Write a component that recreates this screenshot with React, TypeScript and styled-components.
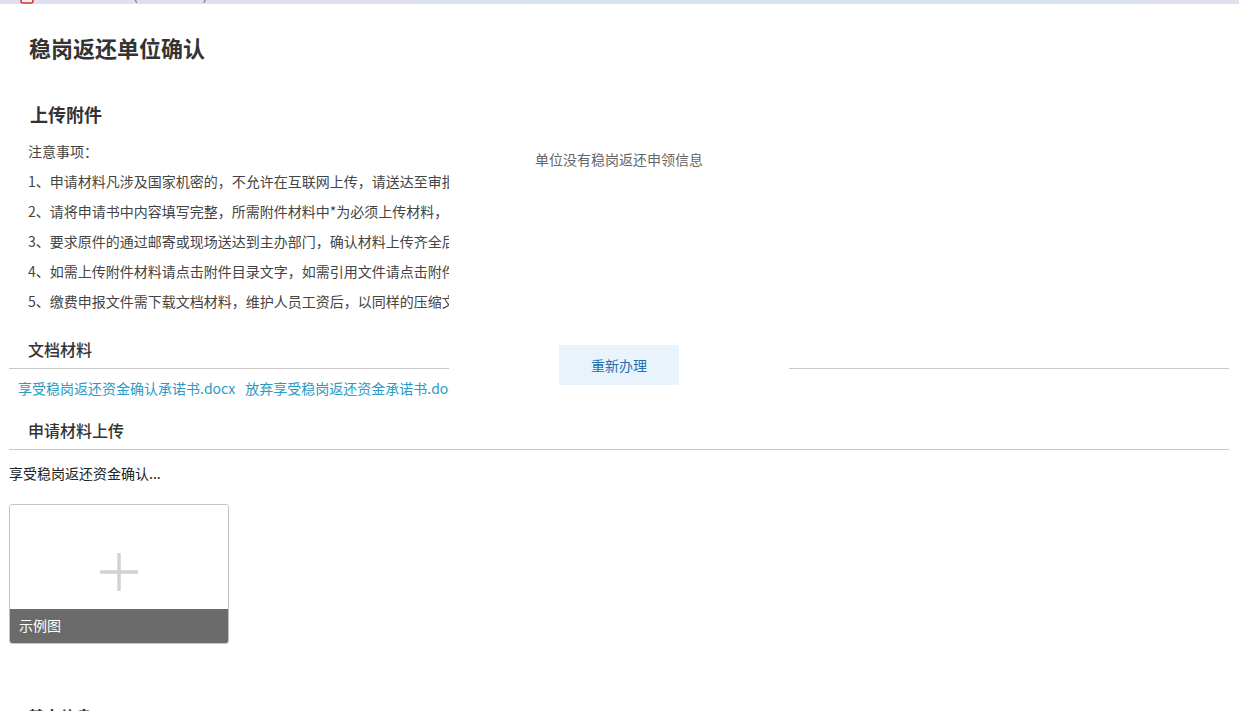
import styled, { createGlobalStyle } from "styled-components";

const GlobalStyle = createGlobalStyle`
  html, body {
    margin: 0;
    padding: 0;
    background: #fff;
    overflow: hidden;
  }
  body {
    font-family: "Noto Sans CJK SC", "Noto Sans", sans-serif;
    font-size: 14px;
    color: #333;
  }
`;

const Page = styled.div`
  position: relative;
  width: 1239px;
  height: 711px;
  overflow: hidden;
`;

const TabStrip = styled.div`
  height: 4px;
  display: flex;
  align-items: flex-end;
  padding-left: 20px;
  overflow: hidden;
  background: linear-gradient(90deg, #e0e0f2 0%, #dcdff0 30%, #d6e2ee 50%, #d6e3ec 80%, #e0e0ee 100%);
`;

const TabIcon = styled.svg`
  flex: none;
  width: 14px;
  height: 13px;
`;

const TabParen = styled.span<{ $left: number }>`
  flex: none;
  margin-left: ${(props) => props.$left}px;
  font-size: 14px;
  line-height: 19px;
  color: #666;
`;

const Content = styled.div`
  padding: 0 10px 0 9px;
`;

const Title = styled.h1`
  margin: 28px 0 0 20px;
  font-size: 22px;
  line-height: 30px;
  font-weight: 700;
  color: #333;
`;

const SectionTitle = styled.h2`
  margin: 37px 0 0 21px;
  font-size: 18px;
  line-height: 30px;
  font-weight: 700;
  color: #333;
`;

const Notes = styled.div`
  margin: 7px 0 0 19px;
  font-size: 14px;
  line-height: 30px;
  color: #444;
  white-space: nowrap;
`;

const SubHeader = styled.div<{ $top: number }>`
  height: 34px;
  box-sizing: border-box;
  margin-top: ${(props) => props.$top}px;
  padding-left: 19px;
  border-bottom: 1px solid #c8c8c8;
  font-size: 16px;
  line-height: 28px;
  font-weight: 500;
  color: #333;
`;

const LinkRow = styled.div`
  display: flex;
  gap: 10px;
  margin: 8px 0 0 9px;
  line-height: 22px;
  white-space: nowrap;
`;

const DocLink = styled.a`
  font-size: 14px;
  color: #2a9ac6;
`;

const UploadLabel = styled.div`
  margin-top: 12px;
  font-size: 14px;
  line-height: 22px;
  color: #222;
`;

const UploadCard = styled.div`
  width: 220px;
  height: 140px;
  box-sizing: border-box;
  margin-top: 20px;
  display: flex;
  flex-direction: column;
  border: 1px solid #c4c4c4;
  border-radius: 3px;
  overflow: hidden;
`;

const UploadArea = styled.div`
  flex: 1;
  box-sizing: border-box;
  padding-top: 30px;
  display: flex;
  align-items: center;
  justify-content: center;
  background: #fff;
`;

const Caption = styled.div`
  height: 34px;
  padding-left: 9px;
  background: #6b6b6b;
  font-size: 14px;
  line-height: 33px;
  color: #fff;
`;

const NextTitle = styled.div`
  margin: 58px 0 0 19px;
  font-size: 16px;
  line-height: 28px;
  font-weight: 700;
  color: #333;
`;

const Overlay = styled.div`
  position: absolute;
  left: 449px;
  top: 130px;
  width: 340px;
  height: 280px;
  box-sizing: border-box;
  padding-top: 18px;
  display: flex;
  flex-direction: column;
  align-items: center;
  background: #fff;
`;

const OverlayText = styled.div`
  font-size: 14px;
  line-height: 22px;
  color: #666;
`;

const RetryButton = styled.button`
  width: 120px;
  height: 40px;
  margin-top: 175px;
  padding: 0;
  border: 0;
  border-radius: 2px;
  background: #e8f3fb;
  font-family: inherit;
  font-size: 14px;
  color: #1f6fb2;
`;

const notes = [
  "注意事项：",
  "1、申请材料凡涉及国家机密的，不允许在互联网上传，请送达至审批部门。",
  "2、请将申请书中内容填写完整，所需附件材料中*为必须上传材料，",
  "3、要求原件的通过邮寄或现场送达到主办部门，确认材料上传齐全后提交。",
  "4、如需上传附件材料请点击附件目录文字，如需引用文件请点击附件。",
  "5、缴费申报文件需下载文档材料，维护人员工资后，以同样的压缩文件上传。",
];

const App = () => {
  return (
    <Page>
      <GlobalStyle />
      <TabStrip>
        <TabIcon viewBox="0 0 14 13">
          <rect x="1" y="0" width="12" height="12" rx="2" fill="#f3eef2" stroke="#d9363e" strokeWidth="1.6" />
        </TabIcon>
        <TabParen $left={99}>(</TabParen>
        <TabParen $left={65}>)</TabParen>
      </TabStrip>
      <Content>
        <Title>稳岗返还单位确认</Title>
        <SectionTitle>上传附件</SectionTitle>
        <Notes>
          {notes.map((note) => (
            <div key={note}>{note}</div>
          ))}
        </Notes>
        <SubHeader $top={19}>文档材料</SubHeader>
        <LinkRow>
          <DocLink>享受稳岗返还资金确认承诺书.docx</DocLink>
          <DocLink>放弃享受稳岗返还资金承诺书.docx</DocLink>
        </LinkRow>
        <SubHeader $top={17}>申请材料上传</SubHeader>
        <UploadLabel>享受稳岗返还资金确认...</UploadLabel>
        <UploadCard>
          <UploadArea>
            <svg width="40" height="40" viewBox="0 0 40 40">
              <path d="M20 1v38M1 20h38" stroke="#d2d2d2" strokeWidth="3.5" fill="none" />
            </svg>
          </UploadArea>
          <Caption>示例图</Caption>
        </UploadCard>
        <NextTitle>基本信息</NextTitle>
      </Content>
      <Overlay>
        <OverlayText>单位没有稳岗返还申领信息</OverlayText>
        <RetryButton>重新办理</RetryButton>
      </Overlay>
    </Page>
  );
};

export default App;
